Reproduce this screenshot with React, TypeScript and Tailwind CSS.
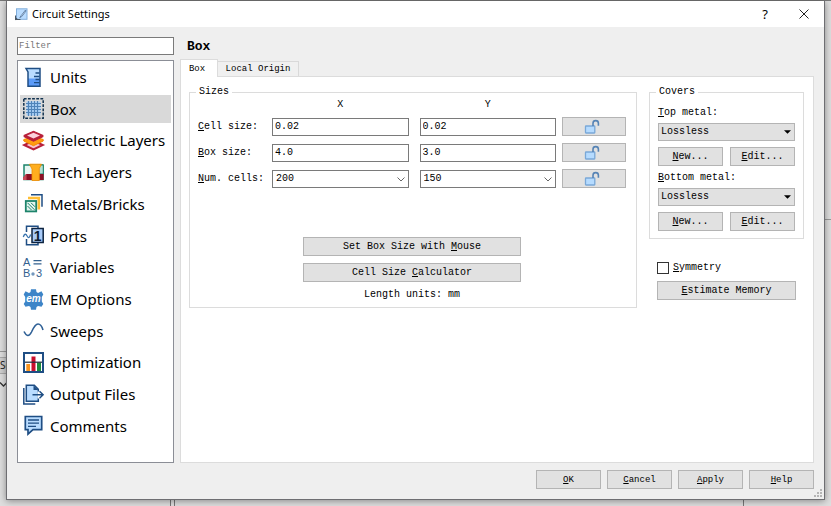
import type { ReactNode } from "react";

const mono = "font-['Liberation_Mono',monospace]";
const sans = "font-['Noto_Sans',sans-serif]";
const btn = "border border-[#b4b4b4] bg-[#e1e1e1] h-[19px] flex items-center justify-center whitespace-pre";

/* Label text with its mnemonic letter marked by "&". */
function Mn({ text }: { text: string }) {
  const i = text.indexOf("&");
  if (i < 0) return <span>{text}</span>;
  return (
    <span>
      {text.slice(0, i)}
      <span className="underline underline-offset-1">{text[i + 1]}</span>
      {text.slice(i + 2)}
    </span>
  );
}

function Icon({ children }: { children: ReactNode }) {
  return (
    <svg viewBox="0 0 21 21" className="h-[21px] w-[21px] shrink-0 overflow-visible" fill="none" aria-hidden="true">
      {children}
    </svg>
  );
}

const navy = "#1f4e84";

const items: { name: string; icon: ReactNode }[] = [
  {
    name: "Units",
    icon: (
      <>
        <path d="M3 1.500h14v17.500H5V5z" fill="#b9dcff" />
        <path d="M5 11.500h12v7.500H5z" fill="#5b9bf8" />
        <path d="M3 1.500h14v17.800H5V5z" stroke={navy} strokeWidth="1.500" />
        <path d="M12.500 6h4M11 9.500h5.500M12.500 12.500h4M11 15.700h5.500" stroke={navy} strokeWidth="1.300" />
      </>
    ),
  },
  {
    name: "Box",
    icon: (
      <>
        <rect x="3.500" y="3.500" width="14" height="14" fill="#a9d0f5" />
        <path d="M5.500 3v15M8.500 3v15M11.500 3v15M14.500 3v15M3 5.500h15M3 8.500h15M3 11.500h15M3 14.500h15" stroke="#4f83b8" strokeWidth="1.200" />
        <rect x=".8" y=".8" width="19.400" height="19.400" stroke="#12324f" strokeWidth="1.500" strokeDasharray="2.800 1.350" />
      </>
    ),
  },
  {
    name: "Dielectric Layers",
    icon: (
      <>
        <path d="M1.200 15l9.300 4.500 9.300-4.500-9.300-4.500z" fill="#f9c3cf" stroke="#b81f3a" strokeWidth="2" />
        <path d="M.8 9.500v1.500l9.700 4.700 9.700-4.700V9.500l-9.700-3z" fill="#ff9c12" stroke="#f58a00" />
        <path d="M1.200 5.500v1.200l9.300 4.500 9.300-4.500V5.500l-9.300-4.200z" fill="#b81f3a" stroke="#b81f3a" strokeWidth="1.200" />
        <path d="M4 5.500l6.500 3 6.500-3-6.500-2.800z" fill="#fbd0dc" />
      </>
    ),
  },
  {
    name: "Tech Layers",
    icon: (
      <>
        <rect x="1" y="3" width="19" height="14.500" fill="#e6f6f2" stroke="#1d846b" strokeWidth="1.500" />
        <path d="M16 3h4.300v9H15z" fill="#b6e0d5" stroke="#1d846b" />
        <path d="M3 12h17.700V18H.3v-2.500z" fill="#8d1024" />
        <path d="M0 15.500L3.500 12v6H0z" fill="#c74a58" />
        <path d="M6.500 2.200h12l-2.200 4.300v12H9V7z" fill="#ffae1f" stroke="#f08a00" strokeWidth=".8" />
      </>
    ),
  },
  {
    name: "Metals/Bricks",
    icon: (
      <>
        <path d="M8 1.800h11v12" stroke={navy} strokeWidth="1.500" />
        <path d="M5 5h10.800v11.500" stroke="#ffbe35" strokeWidth="2.600" />
        <rect x="2.800" y="8" width="10.400" height="10.400" fill="#e3f4ee" stroke="#1d846b" strokeWidth="1.800" />
        <path d="M4.500 13l4 4M4.500 9.800l7 7M8 9.800l4 4" stroke="#1d846b" />
      </>
    ),
  },
  {
    name: "Ports",
    icon: (
      <>
        <path d="M3.500 7V1.200h11.500v2M3.500 14v5.800h11.500v-2" stroke={navy} strokeWidth="1.500" />
        <path d="M.3 12c1-3.500 2.500-3.500 3.800-1s2.500 2 3.500-1.500" stroke="#3a74ae" strokeWidth="1.300" />
        <rect x="9" y="3.500" width="11.200" height="14" fill="#a9cbf8" stroke="#0c2340" strokeWidth="1.500" />
        <text x="10.700" y="15.500" fontSize="14" fontWeight="700" fontFamily="Liberation Sans" fill="#0c1c30">1</text>
      </>
    ),
  },
  {
    name: "Variables",
    icon: (
      <>
        <text x="0" y="9" fontSize="11" fontFamily="Liberation Sans" fill="#33618f">A</text>
        <text x="0" y="20" fontSize="11" fontFamily="Liberation Sans" fill="#33618f">B</text>
        <text x="13" y="20" fontSize="11" fontFamily="Liberation Sans" fill="#33618f">3</text>
        <path d="M10.500 3.700h8M10.500 6.900h8" stroke="#33618f" strokeWidth="1.200" />
        <circle cx="10" cy="17" r="1.700" fill="#7397bd" />
      </>
    ),
  },
  {
    name: "EM Options",
    icon: (
      <>
        <path d="M8 .3h5l.5 2.800 1.500.8 3.500-1.700 1.800 3.300-1.500 2.500v4.500l1.500 2.500-1.800 2.800-3.500-.8-1.500 1-.5 2.700H8L7.500 18 6 17l-3.500.8L.7 15l1.500-2.500V8L.7 5.500l1.800-3.300L6 3.900l1.500-.8z" fill="#3d85c8" />
        <text x="10.500" y="12.500" textAnchor="middle" fontSize="10" fontWeight="700" fontStyle="italic" fontFamily="Liberation Sans" fill="#ffffff">em</text>
      </>
    ),
  },
  {
    name: "Sweeps",
    icon: <path d="M1 11.500c2.500 5 5 5.500 7.500.5C11 6.500 12.500 4 15 4s4 2.500 5 6" stroke="#2f6096" strokeWidth="1.600" />,
  },
  {
    name: "Optimization",
    icon: (
      <>
        <rect x="1" y="1" width="19" height="19" fill="#fff" stroke={navy} strokeWidth="2" />
        <path d="M3.300 12h3.700v7H3.300z" fill="#f79420" />
        <path d="M8.500 4.500h4V19h-4z" fill="#c8102e" />
        <path d="M14 10.500h4V19h-4z" fill="#1c8a3c" />
        <path d="M2 10.200h17" stroke="#1d2c3d" strokeWidth="1.200" />
      </>
    ),
  },
  {
    name: "Output Files",
    icon: (
      <>
        <path d="M.8 4v16h11.500" stroke={navy} strokeWidth="1.500" />
        <path d="M3.300 1.200h8l4 4v12H3.300z" fill="#b9dcff" stroke={navy} strokeWidth="1.500" />
        <path d="M10.500 1.200v4.800h5z" fill={navy} />
        <path d="M14.500 7.500h2v7h-2z" fill="#fff" />
        <path d="M9.500 10.800h10.500M16.500 7.300l3.600 3.500-3.600 3.500" stroke={navy} strokeWidth="1.500" />
      </>
    ),
  },
  {
    name: "Comments",
    icon: (
      <>
        <path d="M2.300 1.500h16.400v13.200H10l-5 4.500v-4.500H2.300z" fill="#b9dcff" stroke={navy} strokeWidth="1.700" />
        <path d="M5 5h11M5 8.200h11M5 11.400h8" stroke={navy} strokeWidth="1.300" />
      </>
    ),
  },
];

function LockButton({ label }: { label: string }) {
  return (
    <button type="button" aria-label={label} className={`${btn} ml-1.5 w-16`}>
      <svg viewBox="0 0 16 16" className="mr-1 h-4 w-4" fill="none" aria-hidden="true">
        <rect x="1.500" y="7" width="9.300" height="7" rx=".5" fill="#b5dbff" stroke="#79a8d8" strokeWidth="1.300" />
        <path d="M9 7V4.300a2.700 2.700 0 0 1 5.400 0v2.500" stroke="#5583b5" strokeWidth="1.600" />
      </svg>
    </button>
  );
}

function TextPair({ id, label, x, y }: { id: string; label: string; x: string; y: string }) {
  const box = "h-[18px] w-full min-w-0 flex-1 border border-[#7a7a7a] bg-white px-[2px] outline-none";
  return (
    <div className="flex items-center">
      <label htmlFor={id} className="w-[74px] shrink-0 whitespace-nowrap"><Mn text={label} /></label>
      <div className="flex min-w-0 flex-1 gap-[11px]">
        <input id={id} defaultValue={x} className={box} />
        <input aria-label={`${id} Y`} defaultValue={y} className={box} />
      </div>
      <LockButton label={`Lock ${id}`} />
    </div>
  );
}

function Combo({ id, label, value }: { id: string; label?: string; value: string }) {
  return (
    <div className="relative min-w-0 flex-1">
      <select id={id} aria-label={label} className="block h-[18px] w-full appearance-none border border-[#7a7a7a] bg-white px-[3px] outline-none">
        <option>{value}</option>
      </select>
      <svg viewBox="0 0 8 5" className="pointer-events-none absolute top-[7px] right-1 h-[5px] w-2" fill="none" aria-hidden="true">
        <path d="M.5.5L4 4 7.500.5" stroke="#666" />
      </svg>
    </div>
  );
}

function MetalChooser({ id, label }: { id: string; label: string }) {
  return (
    <div>
      <label htmlFor={id} className="block h-5 leading-5"><Mn text={label} /></label>
      <div className="relative">
        <select id={id} className="block h-[18px] w-full appearance-none border border-[#b4b4b4] bg-[#e1e1e1] px-[2px] outline-none">
          <option>Lossless</option>
        </select>
        <svg viewBox="0 0 8 4" className="pointer-events-none absolute top-[7px] right-1 h-1 w-[7px]" aria-hidden="true">
          <path d="M0 0h8L4 4z" fill="#000" />
        </svg>
      </div>
      <div className="mt-1.5 flex gap-[7px]">
        <button type="button" className={`${btn} flex-1`}><Mn text="&New..." /></button>
        <button type="button" className={`${btn} flex-1`}><Mn text="&Edit..." /></button>
      </div>
    </div>
  );
}

function Backdrop() {
  return (
    <div className="absolute inset-0 overflow-hidden bg-[#dedede]" aria-hidden="true">
      <div className="absolute inset-x-0 top-0 h-px bg-[#777]" />
      <div className="absolute top-[351px] left-0 w-2 border-t border-[#999]" />
      <div className={`absolute top-[357px] left-0 h-[17px] w-3 border-y border-[#aaa] bg-[#cfcfcf] text-[10px] leading-[15px] text-[#222] ${sans}`}>Se</div>
      <svg viewBox="0 0 8 5" className="absolute top-[382px] left-0 h-[5px] w-2" fill="none">
        <path d="M0 .5L3.500 4 7 .5" stroke="#333" strokeWidth="1.300" />
      </svg>
      <div className="absolute bottom-0 left-[170px] h-2 w-[5px] border-x border-[#777]" />
      <div className="absolute right-[87px] bottom-0 h-2 w-px bg-[#777]" />
      <div className="absolute top-[219px] right-0 h-px w-2 bg-[#999]" />
    </div>
  );
}

export default function App() {
  return (
    <div className={`relative flex h-screen min-h-[506px] pt-px pr-[6px] pb-[6px] pl-[6px] text-[10px] leading-3 text-black ${mono}`}>
      <Backdrop />
      <main className="relative flex min-w-0 flex-1 flex-col border border-t-0 border-[#6e6e72] bg-[#efefef] shadow-[0_1px_7px_rgba(0,0,0,0.4)]">
        <header className="flex h-[26px] shrink-0 items-center bg-white pr-[15px] pl-2">
          <svg viewBox="0 0 13 13" className="h-[13px] w-[13px]" fill="none" aria-hidden="true">
            <rect x="1.500" y=".8" width="10.500" height="10.500" fill="#b9dcff" stroke="#82aedb" />
            <path d="M10.500 2L6 7.800l-1.200 1.800L6.800 8.500 11 3z" fill="#e9f2fb" stroke="#4a6f98" strokeWidth=".8" />
            <path d="M.5 7.500v4h5M2 10l-1.500 2" stroke="#4b5866" strokeWidth="1.200" />
          </svg>
          <h1 className={`ml-1 flex-1 text-[11px] ${sans}`}>Circuit Settings</h1>
          <button type="button" aria-label="What's this" className={`w-4 text-[13px] ${sans}`}>?</button>
          <button type="button" aria-label="Close" className="ml-[26px]">
            <svg viewBox="0 0 10 10" className="h-[10px] w-[10px]" fill="none" aria-hidden="true">
              <path d="M.5.5l9 9M9.500.5l-9 9" stroke="#222" />
            </svg>
          </button>
        </header>

        <div className="flex min-h-0 flex-1 pt-[10px] pr-[10px] pl-[10px]">
          <nav className="flex w-[157px] shrink-0 flex-col">
            <input aria-label="Filter" placeholder="Filter" className="h-[18px] w-full border border-[#7a7a7a] bg-white px-px text-[9px] outline-none placeholder:text-[#777]" />
            <div className="mt-[5px] flex-1 border border-[#8b8e96] bg-white px-[2px] pt-[2px]">
              <ul className={`flex h-[377px] flex-col justify-between text-[15px] ${sans}`}>
                {items.map((it) => (
                  <li key={it.name}>
                    <button type="button" className={`flex h-7 w-full items-center gap-[6px] pl-[3px] whitespace-nowrap ${it.name === "Box" ? "bg-[#d9d9d9]" : ""}`}>
                      <Icon>{it.icon}</Icon>
                      {it.name}
                    </button>
                  </li>
                ))}
              </ul>
            </div>
          </nav>

          <section className="ml-[6px] flex min-w-0 flex-1 flex-col">
            <h2 className="h-[22px] pl-[7px] text-[13px] leading-5 font-bold">Box</h2>
            <div role="tablist" className="relative flex items-end text-[9px]">
              <button role="tab" aria-selected="true" type="button" className="-mb-px h-[18px] w-[38px] border border-b-0 border-[#dcdcdc] bg-white pr-1">Box</button>
              <button role="tab" aria-selected="false" type="button" className="h-[15px] w-[81px] border border-b-0 border-l-0 border-[#d9d9d9] bg-[#f0f0f0] whitespace-pre">Local Origin</button>
            </div>
            <div className="flex flex-1 items-start gap-3 border border-[#dcdcdc] bg-white pt-[9px] pr-[9px] pl-2">
              <fieldset className="h-[222px] min-w-0 flex-1 border border-[#dcdcdc] pr-[10px] pl-2">
                <legend className="-ml-[2px] px-[3px]">Sizes</legend>
                <div className="flex pr-[70px] pl-[74px] text-center leading-[14px]">
                  <div className="flex flex-1 gap-[11px]">
                    <span className="flex-1">X</span>
                    <span className="flex-1">Y</span>
                  </div>
                </div>
                <div className="mt-[5px] flex flex-col gap-[7px]">
                  <TextPair id="cell-size" label="&Cell size:" x="0.02" y="0.02" />
                  <TextPair id="box-size" label="&Box size:" x="4.0" y="3.0" />
                  <div className="flex items-center">
                    <label htmlFor="num-cells" className="w-[74px] shrink-0 whitespace-nowrap"><Mn text="&Num. cells:" /></label>
                    <div className="flex min-w-0 flex-1 gap-[11px]">
                      <Combo id="num-cells" value="200" />
                      <Combo id="num-cells-y" label="Num. cells Y" value="150" />
                    </div>
                    <LockButton label="Lock num-cells" />
                  </div>
                </div>
                <div className="mx-auto mt-[49px] flex w-[218px] flex-col gap-[7px] text-center">
                  <button type="button" className={btn}><Mn text="Set Box Size with &Mouse" /></button>
                  <button type="button" className={btn}><Mn text="Cell Size &Calculator" /></button>
                  <p>Length units: mm</p>
                </div>
              </fieldset>

              <div className="w-[155px] shrink-0">
                <fieldset className="border border-[#dcdcdc] px-2 pb-[7px]">
                  <legend className="-ml-[2px] px-[3px]">Covers</legend>
                  <div className="mt-[5px] flex flex-col gap-[2px]">
                    <MetalChooser id="top-metal" label="&Top metal:" />
                    <MetalChooser id="bottom-metal" label="&Bottom metal:" />
                  </div>
                </fieldset>
                <div className="px-2 pt-[23px]">
                  <label className="flex items-center gap-1">
                    <input type="checkbox" className="h-3 w-3 appearance-none border border-[#333] bg-white" />
                    <Mn text="&Symmetry" />
                  </label>
                  <button type="button" className={`${btn} mt-[7px] w-full`}><Mn text="&Estimate Memory" /></button>
                </div>
              </div>
            </div>
          </section>
        </div>

        <footer className="relative flex h-9 shrink-0 justify-end gap-[6px] pt-[7px] pr-[10px] text-[9px]">
          <button type="button" className={`${btn} w-[65px]`}><Mn text="&OK" /></button>
          <button type="button" className={`${btn} w-[65px]`}><Mn text="&Cancel" /></button>
          <button type="button" className={`${btn} w-[65px]`}><Mn text="&Apply" /></button>
          <button type="button" className={`${btn} w-[65px]`}><Mn text="&Help" /></button>
          <svg viewBox="0 0 8 8" className="absolute right-[2px] bottom-[2px] h-2 w-2" fill="#b5b5b5" aria-hidden="true">
            <path d="M6 0h2v2H6zM3 3h2v2H3zM6 3h2v2H6zM0 6h2v2H0zM3 6h2v2H3zM6 6h2v2H6z" />
          </svg>
        </footer>
      </main>
    </div>
  );
}
